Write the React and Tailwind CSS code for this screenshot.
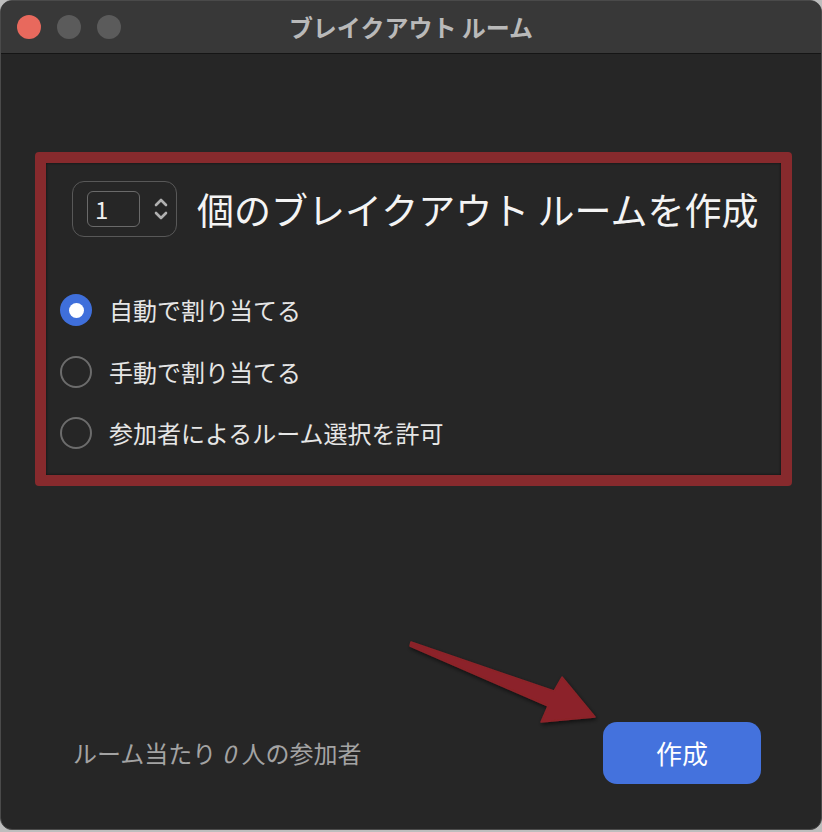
import React from 'react';

const font = { fontFamily: '"Noto Sans CJK JP", "Noto Sans", sans-serif' };

const TrafficLights = () => (
  <div className="flex items-center gap-4 pl-4">
    <span className="h-6 w-6 rounded-full bg-[#e8695d]" />
    <span className="h-6 w-6 rounded-full bg-[#5b5b5b]" />
    <span className="h-6 w-6 rounded-full bg-[#5b5b5b]" />
  </div>
);

const Stepper = ({ value }) => (
  <div className="flex h-[56px] w-[105px] items-center rounded-xl border-[1.5px] border-[#585858] pl-[14px]">
    <div className="flex h-[36px] w-[53px] items-center rounded-md border border-[#6a6a6a] pl-[7px] text-[24px] leading-none text-[#f0f0f0]">
      {value}
    </div>
    <svg className="ml-[13px]" width="16" height="28" viewBox="0 0 16 28" fill="none" stroke="#b0b0b0" strokeWidth="2.6" strokeLinecap="round" strokeLinejoin="round">
      <path d="M3 10 L8 5 L13 10" />
      <path d="M3 18 L8 23 L13 18" />
    </svg>
  </div>
);

const Radio = ({ checked, label }) => (
  <div className="flex items-center gap-[17px]">
    {checked ? (
      <span className="flex h-8 w-8 items-center justify-center rounded-full bg-[#3f6fdb]">
        <span className="h-[15px] w-[15px] rounded-full bg-white" />
      </span>
    ) : (
      <span className="h-8 w-8 rounded-full border-2 border-[#6c6c6c]" />
    )}
    <span className="text-[24px] leading-none text-[#e6e6e6]">{label}</span>
  </div>
);

export default function App() {
  return (
    <div className="h-[832px] w-[822px] bg-[#bdbdbd]" style={font}>
      <div className="relative flex h-[830px] w-[822px] flex-col overflow-hidden rounded-[12px] border border-[#4a4a4a] bg-[#262626]">
        <div className="grid h-[53px] shrink-0 grid-cols-[130px_1fr_130px] items-center border-b border-[#151515] bg-[#383838]">
          <TrafficLights />
          <div className="text-center text-[24px] font-bold leading-none text-[#b9b9b9]">ブレイクアウト ルーム</div>
          <div />
        </div>

        <div className="ml-[34px] mr-[29px] mt-[98px] flex flex-col rounded-[4px] border-[11px] border-[#872a2d] pb-[26px] pl-[14px] pt-[18px] shadow-[inset_0_0_3px_rgba(0,0,0,0.6)]">
          <div className="flex items-center gap-[20px] pl-[12px]">
            <Stepper value="1" />
            <span className="text-[37px] leading-none text-[#f4f4f4]">個のブレイクアウト ルームを作成</span>
          </div>
          <div className="mt-[57px] flex flex-col gap-[29.5px]">
            <Radio checked label="自動で割り当てる" />
            <Radio label="手動で割り当てる" />
            <Radio label="参加者によるルーム選択を許可" />
          </div>
        </div>

        <div className="flex-1" />

        <div className="flex items-center justify-between pb-[45px] pl-[72px] pr-[60px]">
          <div className="flex items-center text-[24px] leading-none text-[#a3a3a3]">
            <span>ルーム当たり</span>
            <span className="ml-[6px] mr-[6px] italic">0</span>
            <span>人の参加者</span>
          </div>
          <button className="flex h-[62px] w-[158px] items-center justify-center rounded-[14px] bg-[#4472dd] text-[26px] leading-none text-white">
            作成
          </button>
        </div>

        <svg className="pointer-events-none absolute left-0 top-0" width="822" height="830" viewBox="0 0 822 830">
          <defs>
            <filter id="sh" x="-20%" y="-20%" width="140%" height="140%">
              <feDropShadow dx="1" dy="2" stdDeviation="2" floodColor="#000" floodOpacity="0.6" />
            </filter>
          </defs>
          <polygon
            points="410,641 553,690 561,676 594,716 540,721 547,705 409,645"
            fill="#8c2329"
            stroke="#8c2329"
            strokeWidth="1.5"
            strokeLinejoin="round"
            filter="url(#sh)"
          />
        </svg>
      </div>
    </div>
  );
}
